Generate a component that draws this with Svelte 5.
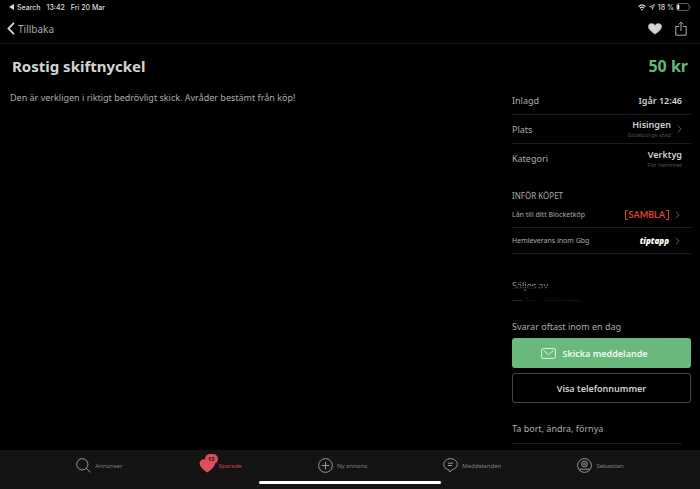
<script>
	let saved = true;
	let tabs = [
		{ id: 'search', label: 'Annonser' },
		{ id: 'saved', label: 'Sparade', badge: 13 },
		{ id: 'new', label: 'Ny annons' },
		{ id: 'messages', label: 'Meddelanden' },
		{ id: 'profile', label: 'Sebastian' }
	];
	let activeTab = 'saved';
	const selectTab = function (id) {
		activeTab = id;
	};
	const toggleSaved = function () {
		saved = !saved;
	};
</script>

<div class="page">
	<div class="statusBar">
		<div class="statusGroup left">
			<svg width="5" height="6" viewBox="0 0 5 6"><path d="M0 3 5 0v6z" fill="#ddd" /></svg>
			<span>Search</span>
			<span class="time">13:42</span>
			<span>Fri 20 Mar</span>
		</div>
		<div class="statusGroup right">
			<svg width="8" height="7" viewBox="0 0 8 7" fill="none" stroke="#ddd" stroke-width="1.2">
				<path d="M.5 2.6Q4-.9 7.5 2.6M1.9 4.2Q4 2.2 6.1 4.2" />
				<path d="M4 6.7 2.8 5.4Q4 4.4 5.2 5.4z" fill="#ddd" stroke="none" />
			</svg>
			<svg class="location" width="6" height="6" viewBox="0 0 6 6"><path d="M.6 2.8 5.4.6 3.3 5.4V2.8z" fill="none" stroke="#ccc" stroke-width=".8" /></svg>
			<span>18 %</span>
			<svg width="15" height="8" viewBox="0 0 15 8">
				<rect x=".5" y=".5" width="12.5" height="7" rx="2" fill="none" stroke="#777" stroke-width=".8" />
				<rect x="1.3" y="1.5" width="2" height="5" rx=".6" fill="#fff" />
				<path d="M14 2.7q1 1.3 0 2.6z" fill="#888" />
			</svg>
		</div>
	</div>

	<header class="navBar">
		<button class="back">
			<svg width="8" height="13" viewBox="0 0 8 13"><path d="M7 .8 1.5 6.5 7 12.2" fill="none" stroke="#ddd" stroke-width="1.8" /></svg>
			Tillbaka
		</button>
		<div class="actions">
			<button aria-label="Spara" on:click={toggleSaved}>
				<svg width="14" height="12" viewBox="0 0 14 12"><path d="M7 11.2C4 9.2.4 6.4.4 3.6.4 1.8 1.8.5 3.5.5 5 .5 6.3 1.3 7 2.6 7.7 1.3 9 .5 10.5.5c1.7 0 3.1 1.3 3.1 3.1 0 2.8-3.6 5.6-6.6 7.6z" fill={saved ? '#d2d2d4' : 'none'} stroke="#d2d2d4" stroke-width=".5" /></svg>
			</button>
			<button aria-label="Dela">
				<svg width="12" height="15" viewBox="0 0 12 15" fill="none" stroke="#aaa" stroke-width="1"><path d="M4 5.5H.8v8.7h10.4V5.5H8M6 10V1.2M3.8 3.4 6 1.2l2.2 2.2" /></svg>
			</button>
		</div>
	</header>

	<main>
		<div class="titleRow">
			<h1>Rostig skiftnyckel</h1>
			<p class="price">50 kr</p>
		</div>
		<div class="columns">
			<p class="description">Den är verkligen i riktigt bedrövligt skick. Avråder bestämt från köp!</p>
			<aside>
				<div class="row first">
					<span>Inlagd</span>
					<strong>Igår 12:46</strong>
				</div>
				<a class="row" href="#plats">
					<span>Plats</span>
					<span class="value"><strong>Hisingen</strong><small>Göteborgs stad</small></span>
					<svg class="chevron" width="5" height="8" viewBox="0 0 5 8"><path d="M.7.6 4.2 4 .7 7.4" /></svg>
				</a>
				<div class="row last">
					<span>Kategori</span>
					<span class="value"><strong>Verktyg</strong><small>För hemmet</small></span>
				</div>

				<h2>INFÖR KÖPET</h2>
				<a class="row partner" href="#lan">
					<span>Lån till ditt Blocketköp</span>
					<span class="sambla"><i></i>SAMBLA<i class="end"></i></span>
					<svg class="chevron" width="5" height="8" viewBox="0 0 5 8"><path d="M.7.6 4.2 4 .7 7.4" /></svg>
				</a>
				<a class="row partner" href="#hemleverans">
					<span>Hemleverans inom Gbg</span>
					<span class="tiptapp">tiptapp</span>
					<svg class="chevron" width="5" height="8" viewBox="0 0 5 8"><path d="M.7.6 4.2 4 .7 7.4" /></svg>
				</a>

				<div class="seller">
					<p class="soldBy">Säljes av</p>
					<svg width="72" height="8" viewBox="0 0 72 8" stroke="#161616" stroke-width="1">
						<path d="M0 4.5h10" stroke="#222" />
						<path d="M14 4.5h9M13 2.5h4M32 4.5h37" stroke-dasharray="3 1" />
						<path d="M35 2.5h25M38 6.5h5M62 6.5h6" stroke-dasharray="1 3" />
					</svg>
				</div>
				<p class="response">Svarar oftast inom en dag</p>
				<button class="message">
					<svg width="15" height="11" viewBox="0 0 15 11" fill="none" stroke="#e4f4e7"><rect x=".6" y=".6" width="13.8" height="9.8" rx="1.5" /><path d="m2.5 2.5 5 4 5-4" /></svg>
					Skicka meddelande
				</button>
				<button class="phone">Visa telefonnummer</button>
				<a class="manage" href="#hantera">Ta bort, ändra, förnya</a>
			</aside>
		</div>
	</main>

	<footer>
		<nav>
			{#each tabs as tab}
				<button class="tab" class:active={activeTab === tab.id} on:click={() => selectTab(tab.id)}>
					<span class="icon">
						{#if tab.id === 'search'}
							<svg width="15" height="15" viewBox="0 0 15 15"><circle cx="6.3" cy="6.3" r="5.6" /><path d="m10.4 10.4 4 4" /></svg>
						{:else if tab.id === 'saved'}
							<svg width="17" height="15" viewBox="0 0 17 15"><path class="filled" d="M8.3 14.4C4.6 12 .6 9 .6 5.3.6 3 2.4 1.2 4.6 1.2c1.6 0 3 .9 3.7 2.3C9 2.1 10.4 1.2 12 1.2c2.2 0 4 1.8 4 4.1 0 3.7-4 6.7-7.7 9.1z" /></svg>
						{:else if tab.id === 'new'}
							<svg width="15" height="15" viewBox="0 0 15 15"><circle cx="7.5" cy="7.5" r="6.9" /><path d="M7.5 3.7v7.6M3.7 7.5h7.6" /></svg>
						{:else if tab.id === 'messages'}
							<svg width="15" height="15" viewBox="0 0 15 15"><path d="M5.5 11.6C2.7 11.1.7 9 .7 6.3.7 3.2 3.7.7 7.5.7s6.8 2.5 6.8 5.6c0 2.6-2.1 4.8-5 5.4L6.8 14z" /><path d="M5 5.2h5M5 7.5h4" /></svg>
						{:else}
							<svg width="15" height="15" viewBox="0 0 15 15"><circle cx="7.5" cy="7.5" r="6.9" /><circle cx="7.5" cy="6" r="2.9" /><circle cx="7.5" cy="6" r="1" /><path d="M2.2 11.2h10.6" /></svg>
						{/if}
						{#if tab.badge}<span class="badge">{tab.badge}</span>{/if}
					</span>
					<span>{tab.label}</span>
				</button>
			{/each}
		</nav>
		<div class="homeBar"></div>
	</footer>
</div>

<style>
	:global(body) {
		margin: 0;
		background: #000;
	}
	.page {
		display: flex;
		flex-direction: column;
		min-height: 100vh;
		background: #000;
		color: #acacae;
		font-family: "Noto Sans", sans-serif;
		font-size: 9px;
	}
	svg {
		display: block;
		flex: none;
	}
	h1, h2, p {
		margin: 0;
	}
	button {
		padding: 0;
		border: 0;
		background: none;
		color: inherit;
		font: inherit;
		cursor: pointer;
	}
	a {
		color: inherit;
		text-decoration: none;
	}
	.statusBar {
		display: flex;
		justify-content: space-between;
		height: 14px;
		padding: 0 9px;
		font-family: Inter, sans-serif;
		font-size: 7px;
		font-weight: 500;
		color: #ddd;
	}
	.statusGroup {
		display: flex;
		align-items: center;
	}
	.left {
		gap: 3px;
	}
	.left .time {
		margin: 0 3px;
	}
	.right {
		gap: 2px;
	}
	.location {
		margin: 0 1px;
	}
	.navBar {
		display: flex;
		justify-content: space-between;
		align-items: center;
		height: 29px;
		padding: 0 13px 0 7px;
		border-bottom: 1px solid #161616;
	}
	.back {
		display: flex;
		align-items: center;
		gap: 3px;
		font-size: 10px;
	}
	.actions {
		display: flex;
		align-items: center;
		gap: 13px;
	}
	.titleRow {
		display: flex;
		justify-content: space-between;
		align-items: center;
		height: 44px;
		padding: 0 12px;
	}
	h1, .price {
		font-size: 15px;
		font-weight: 700;
		line-height: 20px;
		color: #d4d4d6;
	}
	.price {
		font-size: 16px;
		color: #66b87a;
	}
	.columns {
		display: grid;
		grid-template-columns: 1fr 179px;
		gap: 16px;
		padding: 0 9px 0 10px;
	}
	.description {
		padding-top: 3px;
		line-height: 14px;
	}
	aside {
		display: flex;
		flex-direction: column;
	}
	.row {
		display: flex;
		align-items: center;
		box-sizing: border-box;
		height: 29px;
		padding-right: 9px;
		border-bottom: 1px solid #1c1c1e;
	}
	.row > :first-child {
		flex: 1;
	}
	.first {
		height: 27px;
		line-height: 12px;
	}
	strong {
		font-weight: 600;
		color: #d2d2d4;
		line-height: 12px;
	}
	.value {
		display: flex;
		flex-direction: column;
		align-items: flex-end;
	}
	small {
		font-size: 6px;
		line-height: 8px;
		color: #505052;
	}
	.chevron {
		margin-left: 6px;
		fill: none;
		stroke: #58585a;
	}
	.last {
		border-bottom: 0;
	}
	h2 {
		margin-top: 17px;
		font-size: 8px;
		font-weight: 400;
		line-height: 12px;
	}
	.partner {
		height: 26px;
		padding-right: 11px;
		font-size: 7px;
	}
	.sambla {
		display: flex;
		align-items: center;
		gap: 1px;
		font-family: Lato, sans-serif;
		font-size: 9px;
		font-weight: 700;
		color: #dc4030;
	}
	.sambla i {
		width: 2px;
		height: 8px;
		border: 1px solid #dc4030;
		border-right: 0;
	}
	.sambla .end {
		border-right: 1px solid #dc4030;
		border-left: 0;
	}
	.tiptapp {
		font-size: 8px;
		font-style: italic;
		font-weight: 900;
		color: #fff;
	}
	.seller {
		margin-top: 25px;
	}
	.soldBy {
		width: 40px;
		margin-bottom: 3px;
		line-height: 14px;
		background: linear-gradient(to bottom, #a0a0a2 7px, #222 7px, #222 8px, #77777a 8px, #77777a 9px, #222 9px, #222 10px, #77777a 10px);
		background-clip: text;
		color: transparent;
	}
	.response {
		margin: 16px 0 4px;
		line-height: 14px;
	}
	.message, .phone {
		display: flex;
		justify-content: center;
		align-items: center;
		gap: 6px;
		box-sizing: border-box;
		height: 30px;
		border-radius: 3px;
		font-weight: 600;
	}
	.message {
		padding-right: 14px;
		background: #69b87c;
		color: #f2faf3;
	}
	.phone {
		margin-top: 5px;
		border: 1px solid #48484a;
		color: #d2d2d4;
	}
	.manage {
		margin: 18px 9px 0 0;
		padding-bottom: 6px;
		border-bottom: 1px solid #1c1c1e;
		line-height: 16px;
	}
	footer {
		display: flex;
		flex-direction: column;
		box-sizing: border-box;
		height: 39px;
		margin-top: auto;
		background: #141414;
	}
	nav {
		display: flex;
		justify-content: space-evenly;
		height: 31px;
	}
	.tab {
		display: flex;
		align-items: center;
		gap: 4px;
		font-size: 6px;
		color: #808082;
	}
	.tab svg {
		fill: none;
		stroke: #98989a;
	}
	.tab.active {
		gap: 3px;
		color: #cc4350;
	}
	.tab.active svg {
		stroke: #e04e5b;
	}
	.tab .filled {
		fill: #e04e5b;
		stroke: none;
	}
	.icon {
		position: relative;
	}
	.badge {
		position: absolute;
		top: -4px;
		right: -2px;
		width: 13px;
		height: 10px;
		border-radius: 5px;
		background: #e04e5b;
		color: #1c0c0e;
		font-weight: 700;
		line-height: 10px;
		text-align: center;
	}
	.homeBar {
		align-self: center;
		width: 26%;
		height: 3px;
		border-radius: 2px;
		background: #fff;
	}
</style>
